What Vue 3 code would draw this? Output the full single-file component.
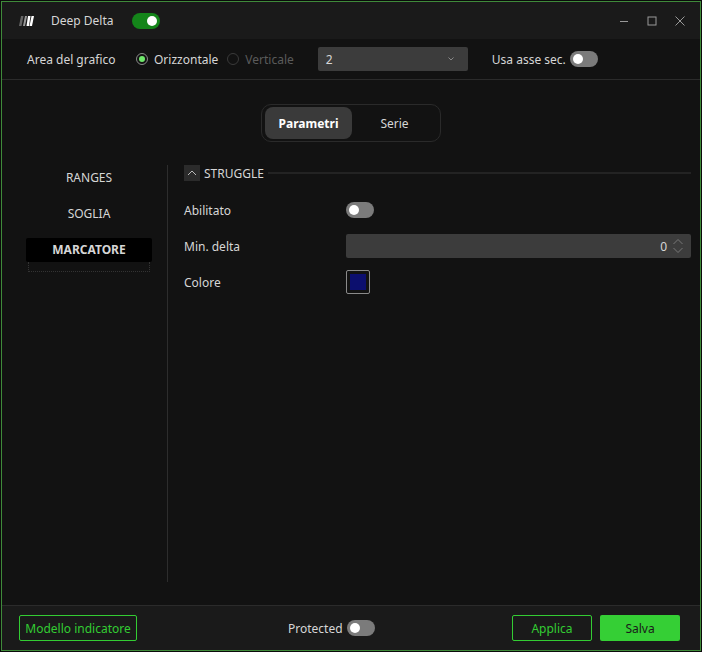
<script setup>
const navItems = [
  { label: 'RANGES', active: false },
  { label: 'SOGLIA', active: false },
  { label: 'MARCATORE', active: true },
]
</script>

<template>
  <div class="window">
    <header class="titlebar">
      <svg class="logo" width="16" height="10" viewBox="0 0 16 10">
        <path d="M3 0h2.5L3.500 10H1z" fill="#666" />
        <path d="M7 0h2L7 10H5z" fill="#999" />
        <path d="M10 0h2.500L11 10H8.500z" fill="#fff" />
        <path d="M13.500 0H16l-2 10h-2.500z" fill="#fff" />
      </svg>
      <span class="app-name">Deep Delta</span>
      <span class="switch on"><i></i></span>
      <div class="win-controls">
        <svg width="10" height="10" viewBox="0 0 10 10"><path d="M1 5.500h8" stroke="#999" fill="none" /></svg>
        <svg width="10" height="10" viewBox="0 0 10 10"><rect x="1" y="1" width="8" height="8" stroke="#999" fill="none" /></svg>
        <svg width="10" height="10" viewBox="0 0 10 10"><path d="M.5.500l9 9M9.500.500l-9 9" stroke="#999" fill="none" /></svg>
      </div>
    </header>

    <div class="toolbar">
      <span class="tool-label">Area del grafico</span>
      <span class="radio checked"><i></i></span>
      <span class="radio-text">Orizzontale</span>
      <span class="radio disabled"></span>
      <span class="radio-text muted">Verticale</span>
      <div class="select">
        <span>2</span>
        <svg width="6" height="4" viewBox="0 0 6 4"><path d="M.5.500L3 3 5.500.500" stroke="#888" fill="none" /></svg>
      </div>
      <span class="axis-label">Usa asse sec.</span>
      <span class="switch"><i></i></span>
    </div>

    <main class="content">
      <div class="tabs-row">
        <div class="tabs">
          <button class="tab active">Parametri</button>
          <button class="tab">Serie</button>
        </div>
      </div>
      <div class="panels">
        <nav class="side">
          <div v-for="item in navItems" :key="item.label" class="side-wrap">
            <div class="side-item" :class="{ active: item.active }">{{ item.label }}</div>
            <div v-if="item.active" class="focus-tail"></div>
          </div>
        </nav>
        <section class="form">
          <div class="section-head">
            <span class="collapse">
              <svg width="10" height="6" viewBox="0 0 10 6"><path d="M1 5l4-4 4 4" stroke="#bbb" fill="none" /></svg>
            </span>
            <span class="section-title">STRUGGLE</span>
            <span class="section-line"></span>
          </div>
          <div class="row switch-row">
            <label>Abilitato</label>
            <span class="switch"><i></i></span>
          </div>
          <div class="row input-row">
            <label>Min. delta</label>
            <div class="num-input">
              <span>0</span>
              <svg width="10" height="14" viewBox="0 0 10 14">
                <path d="M.5 5L5 .5 9.500 5M.5 9L5 13.500 9.500 9" stroke="#777" fill="none" />
              </svg>
            </div>
          </div>
          <div class="row color-row">
            <label>Colore</label>
            <span class="swatch"><i></i></span>
          </div>
        </section>
      </div>
    </main>

    <footer class="footer">
      <button class="btn outline model">Modello indicatore</button>
      <div class="protected">
        <span>Protected</span>
        <span class="switch"><i></i></span>
      </div>
      <div class="actions">
        <button class="btn outline apply">Applica</button>
        <button class="btn solid">Salva</button>
      </div>
    </footer>
  </div>
</template>

<style>
html, body { margin: 0; background: #0b0b0b; }
</style>

<style scoped>
* { box-sizing: border-box; }
.window {
  width: 700px;
  height: 650px;
  margin: 1px;
  border: 1px solid #3f8a3a;
  display: flex;
  flex-direction: column;
  background: #121212;
  font-family: "Noto Sans", sans-serif;
  font-size: 12px;
  color: #d6d6d6;
  overflow: hidden;
}
.titlebar {
  height: 37px;
  flex: none;
  background: #1a1a1a;
  display: flex;
  align-items: center;
  padding-left: 16px;
}
.logo { margin-right: 17px; }
.app-name { margin-right: 18px; }
.win-controls {
  margin-left: auto;
  display: flex;
  gap: 18px;
  padding-right: 15px;
}
.switch {
  width: 28px;
  height: 16px;
  border-radius: 8px;
  background: #7b7b7b;
  display: inline-flex;
  align-items: center;
  padding: 0 3px;
  flex: none;
}
.switch i {
  width: 10px;
  height: 10px;
  border-radius: 50%;
  background: #fff;
}
.switch.on {
  background: #14851a;
  justify-content: flex-end;
}
.toolbar {
  height: 41px;
  flex: none;
  display: flex;
  align-items: center;
  border-bottom: 1px solid #2b2b2b;
  padding-left: 25px;
}
.tool-label { width: 109px; }
.radio {
  width: 12px;
  height: 12px;
  border-radius: 50%;
  border: 1px solid #8a8a8a;
  display: inline-flex;
  align-items: center;
  justify-content: center;
  margin-right: 6px;
}
.radio i {
  width: 6px;
  height: 6px;
  border-radius: 50%;
  background: #6fe86b;
}
.radio.disabled { border-color: #3a3a3a; }
.radio-text { margin-right: 9px; }
.radio-text.muted { color: #5b5b5b; margin-right: 24px; }
.select {
  width: 150px;
  height: 24px;
  background: #3c3c3c;
  border-radius: 2px;
  display: flex;
  align-items: center;
  justify-content: space-between;
  padding: 0 14px 0 8px;
}
.axis-label { margin-left: 24px; margin-right: 4px; }
.content {
  flex: 1;
  min-height: 0;
  display: flex;
  flex-direction: column;
}
.tabs-row {
  display: flex;
  justify-content: center;
  padding-top: 24px;
}
.tabs {
  width: 180px;
  height: 38px;
  border: 1px solid #2a2a2a;
  border-radius: 10px;
  padding: 2px 3px;
  display: flex;
}
.tab {
  border: none;
  background: none;
  color: #d6d6d6;
  font: inherit;
  padding: 0;
  border-radius: 8px;
  flex: 1;
}
.tab.active {
  flex: none;
  width: 87px;
  background: #3a3a3a;
  color: #fff;
  font-weight: 700;
}
.panels {
  display: flex;
  padding-top: 23px;
  height: 440px;
  margin-top: 0;
}
.side {
  width: 166px;
  flex: none;
  padding: 0 15px 0 24px;
  border-right: 1px solid #2d2d2d;
  text-align: center;
}
.side-wrap { position: relative; margin-top: 12px; }
.side-wrap:first-child { margin-top: 0; }
.side-wrap:first-child { padding-top: 1px; }
.side-item {
  height: 24px;
  line-height: 24px;
  border-radius: 2px;
}
.side-item.active {
  background: #000;
  font-weight: 700;
}
.focus-tail {
  position: absolute;
  left: 2px;
  right: 2px;
  top: 24px;
  height: 10px;
  border: 1px dotted #333;
  border-top: none;
}
.form { flex: 1; padding: 0 9px 0 16px; }
.section-head {
  display: flex;
  align-items: center;
  height: 16px;
}
.collapse {
  width: 16px;
  height: 16px;
  background: #2b2b2b;
  display: inline-flex;
  align-items: center;
  justify-content: center;
  margin-right: 4px;
}
.section-line {
  flex: 1;
  height: 2px;
  background: #232323;
  margin-left: 4px;
}
.row { display: flex; align-items: center; }
.row label { width: 162px; flex: none; }
.switch-row { margin-top: 21px; height: 16px; }
.input-row { margin-top: 16px; height: 24px; }
.color-row { margin-top: 12px; height: 24px; }
.num-input {
  flex: 1;
  height: 24px;
  background: #3c3c3c;
  border-radius: 2px;
  display: flex;
  align-items: center;
  justify-content: flex-end;
  gap: 6px;
  padding-right: 8px;
}
.swatch {
  width: 24px;
  height: 24px;
  border: 1px solid #8a8a8a;
  border-radius: 2px;
  padding: 3px;
  display: flex;
}
.swatch i { flex: 1; background: #0c0f6e; }
.footer {
  height: 45px;
  flex: none;
  margin-top: auto;
  background: #1a1a1a;
  border-top: 1px solid #2b2b2b;
  display: flex;
  align-items: center;
  padding: 0 20px 0 17px;
  position: relative;
}
.btn {
  height: 26px;
  font: inherit;
  border-radius: 2px;
}
.btn.outline {
  background: transparent;
  border: 1px solid #33cc33;
  color: #33cc33;
}
.btn.solid {
  width: 80px;
  background: #35cf35;
  border: none;
  color: #1a1a1a;
}
.model { width: 118px; padding: 0; }
.apply { width: 80px; }
.protected {
  margin-left: 151px;
  display: flex;
  align-items: center;
  gap: 4px;
}
.actions {
  margin-left: auto;
  display: flex;
  gap: 8px;
}
</style>
